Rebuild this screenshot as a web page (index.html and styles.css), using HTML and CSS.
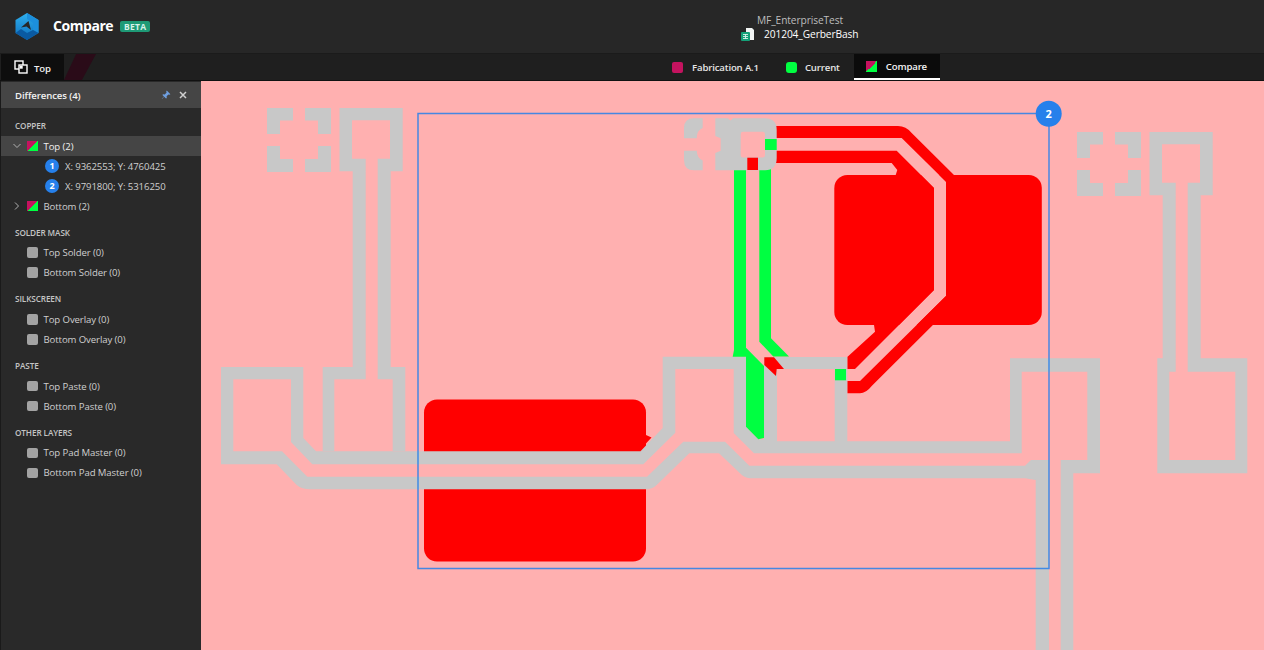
FILE: index.html
```html
<!DOCTYPE html>
<html lang="en">
<head>
<meta charset="utf-8">
<title>Compare</title>
<link rel="stylesheet" href="styles.css">
</head>
<body>
<div class="app">
  <header class="topbar">
    <div class="brand">
      <svg class="logo" viewBox="15 13 24 27" width="24" height="27">
        <defs>
          <linearGradient id="lg1" x1="0" y1="0" x2="0" y2="1">
            <stop offset="0" stop-color="#2fb0ee"/><stop offset="1" stop-color="#0d6ebd"/>
          </linearGradient>
        </defs>
        <path d="M27 13 L38.5 20 V33 L27 40 L15.5 33 V20 Z" fill="url(#lg1)"/>
        <path d="M27 13 L38.5 20 V33 L33 30 V23 L27 19 Z" fill="#1c8fdc"/>
        <path d="M15.5 33 L21 29 L27 33 L33 30 L38.5 33 L27 40 Z" fill="#0a5aa2"/>
        <path d="M21 27.5 L28.5 21 L31 30 L26.5 26.5 Z" fill="#272727"/>
      </svg>
      <span class="brand-name">Compare</span>
      <span class="beta">BETA</span>
    </div>
    <div class="doc">
      <div class="doc-project">MF_EnterpriseTest</div>
      <div class="doc-file">
        <svg class="doc-icon" viewBox="0 0 14 14" width="14" height="14">
          <path d="M5 0 H11 L13 2 V12 H5 Z" fill="#f2f5f4"/>
          <rect x="0" y="4" width="9" height="9" rx="1" fill="#14a078"/>
          <path d="M2 6.5 H7 M2 8.5 H7 M2 10.5 H7 M4.5 6 V11" stroke="#d8f2ea" stroke-width=".9" fill="none"/>
        </svg>
        <span>201204_GerberBash</span>
      </div>
    </div>
  </header>

  <nav class="tabbar">
    <div class="view-tab">
      <svg class="view-icon" viewBox="0 0 14 14" width="14" height="14">
        <rect x="1" y="1" width="8" height="8" fill="none" stroke="#fff" stroke-width="1.4"/>
        <rect x="5" y="5" width="8" height="8" fill="#0e0e0e" stroke="#fff" stroke-width="1.4"/>
        <rect x="5.7" y="5.7" width="3" height="3" fill="#fff"/>
      </svg>
      <span>Top</span>
    </div>
    <div class="slant"></div>
    <div class="tabs">
      <div class="tab"><span class="swatch swatch-mag"></span>Fabrication A.1</div>
      <div class="tab"><span class="swatch swatch-green"></span>Current</div>
      <div class="tab tab-active"><span class="swatch swatch-split"></span>Compare</div>
    </div>
  </nav>

  <main class="main">
    <aside class="panel">
      <div class="panel-head">
        <span>Differences (4)</span>
        <span class="panel-actions">
          <svg viewBox="0 0 10 10" width="10" height="10"><path d="M5.8 .6 L9.4 4.2 L8.4 4.8 L7.4 4.4 L5.6 6.2 L5.8 8 L5 8.6 L3.2 6.8 L1 9 L.8 8.8 L3 6.6 L1.4 5 L2 4.2 L3.8 4.4 L5.6 2.6 L5.2 1.6 Z" fill="#6f9fe0"/></svg>
          <svg viewBox="0 0 10 10" width="10" height="10"><path d="M2 2 L8 8 M8 2 L2 8" stroke="#d0d0d0" stroke-width="1.5" fill="none"/></svg>
        </span>
      </div>
      <div class="panel-list">
        <section class="group">
          <h3>COPPER</h3>
          <div class="row row-sel">
            <svg class="chev" viewBox="0 0 8 8" width="8" height="8"><path d="M.5 2 L4 5.5 L7.5 2" fill="none" stroke="#b0b0b0" stroke-width="1"/></svg>
            <span class="swatch swatch-split swatch-small"></span>Top (2)
          </div>
          <div class="row row-sub"><span class="num">1</span>X: 9362553; Y: 4760425</div>
          <div class="row row-sub"><span class="num">2</span>X: 9791800; Y: 5316250</div>
          <div class="row">
            <svg class="chev" viewBox="0 0 8 8" width="8" height="8"><path d="M2 .5 L5.5 4 L2 7.5" fill="none" stroke="#b0b0b0" stroke-width="1"/></svg>
            <span class="swatch swatch-split swatch-small"></span>Bottom (2)
          </div>
        </section>
        <section class="group">
          <h3>SOLDER MASK</h3>
          <div class="row row-check"><span class="check"></span>Top Solder (0)</div>
          <div class="row row-check"><span class="check"></span>Bottom Solder (0)</div>
        </section>
        <section class="group">
          <h3>SILKSCREEN</h3>
          <div class="row row-check"><span class="check"></span>Top Overlay (0)</div>
          <div class="row row-check"><span class="check"></span>Bottom Overlay (0)</div>
        </section>
        <section class="group">
          <h3>PASTE</h3>
          <div class="row row-check"><span class="check"></span>Top Paste (0)</div>
          <div class="row row-check"><span class="check"></span>Bottom Paste (0)</div>
        </section>
        <section class="group">
          <h3>OTHER LAYERS</h3>
          <div class="row row-check"><span class="check"></span>Top Pad Master (0)</div>
          <div class="row row-check"><span class="check"></span>Bottom Pad Master (0)</div>
        </section>
      </div>
    </aside>

    <svg class="board" viewBox="201 81 1063 569" width="1063" height="569">
      <!-- copper pads -->
      <rect class="red" x="834.3" y="175" width="207.5" height="150" rx="13"/>
      <rect class="red" x="424" y="399.5" width="222" height="162" rx="13"/>
      <path class="red" d="M646 435 L651.5 437.5 L639 451 L646 451 Z"/>
      <path class="pink" d="M424 464 H646 V477 H424 Z M640 460 H647 V465 H640 Z"/>
      <!-- channel through the big pad -->
      <path class="pink" d="M777 138 H901.7 L946 181.7 V296 L860 381 H847 V369 H855 L934 290 V188 L896.7 150.7 H777 Z"/>
      <!-- red traces -->
      <path class="red" d="M776 126 H898 Q906 126 911.7 133 L955 176 V303 L871.7 386 Q866 393.3 860 393.3 H847.3 V381 H860 L946 296 V181.7 L901.7 138 H776 Z"/>
      <path class="red" d="M776 150.7 H896.7 L934 188 V290 L855 369 H847.3 V357 L875 331.7 L874 325 H900 V175 H895.7 L897.3 170 L891.7 163 H776 Z"/>

      <!-- gray network -->
      <path class="gray" d="M339.5 108 H402.7 V171.3 H390.7 V367 H405.3 V451.3 H392.7 V379.3 H377.7 V158.7 H390 V120.3 H352 V158.7 H365.7 V379.3 H334.3 V451.3 H322.7 V367 H352.7 V171.3 H339.5 Z"/>
      <path class="gray" fill-rule="evenodd" d="M221 367 H303.3 V438 L316 451.3 H640.5 L662.7 428 V356.7 H746 V426.7 L758.3 439.3 H764 V357 H847.3 V441.3 H1010 V358.3 H1100 V473.3 H1073.3 V650 H1060.7 V460 H1087.3 V371.7 H1021.7 V453.3 H754 L733.7 433 V369 H675.3 V432.7 L643.3 464.3 H312.3 L291 442 V379.3 H233.3 V451.3 H282 L307.3 476.7 H647 L683.3 441.7 H725 L749.3 465.7 H1025 L1031 460 H1049 V650 H1035.7 V480 L1025 478.3 H750 Q744 478 740 473.3 L719 453.3 H689.3 L656.7 485 Q652 489.3 646 489.3 H310 Q302 489.3 296.7 485 L276.7 464.3 H221 Z M777 369 H834.7 V441.3 H777 Z"/>
      <path class="gray" fill-rule="evenodd" d="M1149.5 132 H1212.7 V195.3 H1200.7 V358.3 H1247.3 V473.3 H1157.3 V358.3 H1162.7 V195.3 H1149.5 Z M1162 144.3 H1200 V182.7 H1187.7 V371.7 H1235.3 V460 H1169.3 V371.7 H1175.7 V182.7 H1162 Z"/>

      <!-- corner marks -->
      <g class="gray">
        <path d="M267 108 H293 V120.5 H280 V134 H267 Z"/>
        <path d="M331 108 H305 V120.5 H318 V134 H331 Z"/>
        <path d="M267 172 H293 V159 H280 V146 H267 Z"/>
        <path d="M331 172 H305 V159 H318 V146 H331 Z"/>
      </g>
      <g class="gray mark-right">
        <path d="M267 108 H293 V120.5 H280 V134 H267 Z"/>
        <path d="M331 108 H305 V120.5 H318 V134 H331 Z"/>
        <path d="M267 172 H293 V159 H280 V146 H267 Z"/>
        <path d="M331 172 H305 V159 H318 V146 H331 Z"/>
      </g>

      <!-- green traces -->
      <path class="green" d="M734 165 H746 V347.7 L764 366 V438 L758.3 439.3 L746 426.7 V356.7 H732.7 L734 350 Z"/>
      <path class="green" d="M759.3 165 H771 V338.3 L789 356.5 H773.3 L759.3 341.7 Z"/>

      <!-- centre pad -->
      <path class="gray" d="M684 138.3 V128 Q684 118.3 694 118.3 H702.7 V128 Q697 130 696.7 138.3 Z"/>
      <path class="gray" d="M684 150.7 V160 Q684 170.3 694 170.3 H702.7 V160.5 Q697 158 696.7 150.7 Z"/>
      <path class="gray" fill-rule="evenodd" d="M715.3 118.3 H728 L730.5 120.5 L733 118.3 H765 Q776.7 118.3 776.7 130 V158 Q776.7 170.3 765 170.3 H715.3 V153 L720.7 150.7 V138.3 L715.3 136 Z M743 131.7 H762.5 Q765 131.7 765 134 V155 Q765 157.5 762.5 157.5 H743 Q740.7 157.5 740.7 155 V134 Q740.7 131.7 743 131.7 Z"/>
      <rect class="green" x="765" y="139" width="11.7" height="11"/>
      <rect class="red" x="747.3" y="157.7" width="10.7" height="12.3"/>
      <rect class="green" x="835" y="369" width="11" height="11.3"/>
      <path class="red" d="M764.3 357.3 H774 L784 369 H776.7 L776 376 L764.3 365 Z"/>

      <!-- selection -->
      <rect class="sel" x="418" y="113.5" width="631" height="455"/>
      <circle class="badge" cx="1048.7" cy="113.7" r="13"/>
      <text class="badge-text" x="1048.7" y="117.7">2</text>
    </svg>
  </main>
</div>
</body>
</html>
```

FILE: styles.css
```css
* { box-sizing: border-box; }
html, body { margin: 0; height: 100%; }
body {
  background: #1f1f1f;
  font-family: "Open Sans", "Liberation Sans", sans-serif;
  font-size: 9.6px;
  letter-spacing: -.1px;
  color: #d8d8d8;
  overflow: hidden;
}
.app { display: flex; flex-direction: column; width: 1264px; height: 650px; }

.topbar {
  display: flex;
  align-items: center;
  height: 54px;
  background: #272727;
  border-bottom: 1px solid #1b1b1b;
  flex: none;
}
.brand { display: flex; align-items: center; width: 741px; padding-left: 15px; }
.logo { display: block; flex: none; }
.brand-name {
  margin: -3px 0 0 14px;
  font-size: 14px;
  font-weight: 700;
  color: #fff;
  letter-spacing: -.45px;
}
.beta {
  margin: -1px 0 0 7px;
  height: 11px;
  line-height: 11px;
  width: 30px;
  text-align: center;
  border-radius: 2px;
  background: #1e9a76;
  color: #d8f2ea;
  font-size: 8.5px;
  font-weight: 700;
  letter-spacing: .3px;
}
.doc { display: flex; flex-direction: column; margin-top: 3px; }
.doc-project { margin-left: 16px; font-size: 10.2px; line-height: 13px; color: #bdbdbd; }
.doc-file { display: flex; align-items: center; font-size: 10.2px; line-height: 13px; color: #fff; }
.doc-icon { flex: none; margin-top: 1px; }
.doc-file span { margin-left: 9px; }

.tabbar {
  display: flex;
  height: 27px;
  background: #1f1f1f;
  border-bottom: 1px solid #111;
  flex: none;
}
.view-tab {
  display: flex;
  align-items: center;
  gap: 6px;
  width: 63px;
  margin-left: 1px;
  padding-left: 13px;
  background: #0e0e0e;
  color: #f0f0f0;
  font-weight: 600;
}
.view-tab span { margin-top: 2px; }
.view-icon { flex: none; }
.slant {
  width: 32px;
  margin-right: 564px;
  background: #2a0b18;
  clip-path: polygon(38% 0, 100% 0, 56% 100%, 0 100%);
}
.tabs { display: flex; }
.tab {
  display: flex;
  align-items: center;
  gap: 9px;
  padding: 1px 14px 0 12px;
  color: #e6e6e6;
  font-weight: 600;
  letter-spacing: -.15px;
}
.tab-active { background: #0b0b0b; color: #f4f4f4; border-bottom: 2px solid #fff; padding-right: 13px; }
.swatch { display: block; width: 11px; height: 11px; flex: none; border-radius: 2px; }
.swatch-mag { background: #c4135f; }
.swatch-green { background: #00ff41; border-radius: 3px; margin: 0 -1px 0 1px; }
.swatch-split { background: linear-gradient(135deg, #c4135f 50%, #00ff41 50%); border-radius: 0; }
.swatch-small { width: 10.5px; height: 10.5px; margin-right: 6px; }

.main { display: flex; flex: 1; min-height: 0; }
.panel {
  width: 201px;
  flex: none;
  background: #292929;
  border-left: 1px solid #1a1a1a;
  padding-top: 1px;
}
.panel-head {
  display: flex;
  align-items: center;
  justify-content: space-between;
  height: 26px;
  padding: 1px 13px 0 14px;
  background: #454545;
  color: #f2f2f2;
  font-weight: 600;
}
.panel-actions { display: flex; gap: 7px; margin-top: -1px; }
.panel-actions svg { display: block; }
.panel-list { padding-top: 8px; }
.group { padding-bottom: 6.7px; }
.group h3 {
  margin: 0;
  padding-left: 14px;
  height: 20px;
  line-height: 20px;
  font-size: 8.2px;
  font-weight: 600;
  color: #c4c4c4;
}
.row {
  display: flex;
  align-items: center;
  height: 20px;
  padding-left: 26px;
  position: relative;
  color: #cfcfcf;
}
.row-sel { background: #454545; color: #f0f0f0; }
.chev { position: absolute; left: 12px; top: 6px; }
.num {
  position: absolute;
  left: 44px;
  top: 3px;
  width: 14px;
  height: 14px;
  border-radius: 50%;
  background: #2680eb;
  color: #fff;
  text-align: center;
  line-height: 14px;
  font-size: 9px;
  font-weight: 700;
}
.row-sub { padding-left: 64px; }
.check {
  display: block;
  width: 10.5px;
  height: 10.5px;
  margin-right: 6px;
  border-radius: 2px;
  background: #a3a3a3;
  flex: none;
}

.board { display: block; flex: none; background: #ffb0b0; }
.red { fill: #f00; }
.pink { fill: #ffb0b0; }
.gray { fill: #c8c8c8; }
.green { fill: #00ff41; }
.mark-right { transform: translate(810px, 24px); }
.sel { fill: none; stroke: #2680eb; stroke-opacity: .85; stroke-width: 1.5; }
.badge { fill: #2680eb; }
.badge-text {
  fill: #fff;
  font-family: "Open Sans", sans-serif;
  font-size: 11px;
  font-weight: 700;
  text-anchor: middle;
}
```
